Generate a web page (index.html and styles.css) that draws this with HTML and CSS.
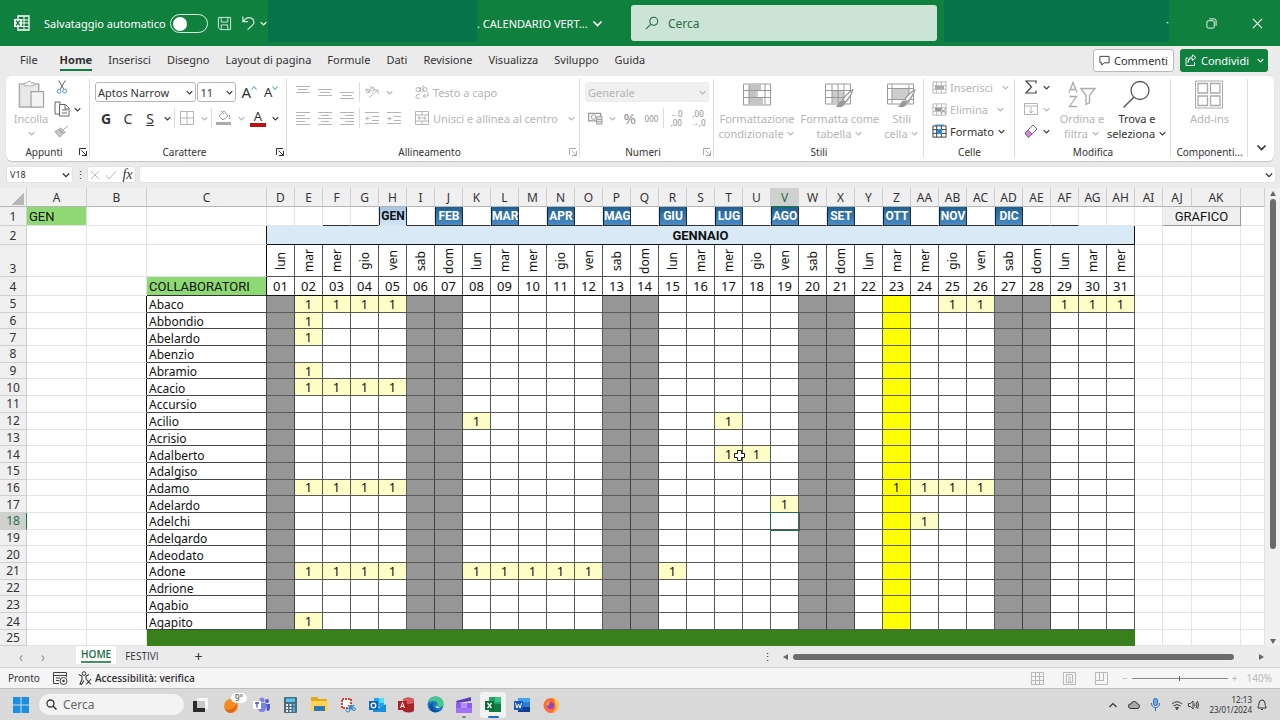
FILE: index.html
```html
<!DOCTYPE html>
<html lang="it">
<head>
  <meta charset="UTF-8" />
  <title>Calendario verticale</title>
  <meta name="viewport" content="width=device-width, initial-scale=1" />
  <link rel="stylesheet" href="styles.css">
</head>
<body>
  <svg class="sprite" aria-hidden="true">
    <symbol id="chev" viewBox="0 0 8 8"><path d="M1.5 2.8 4 5.3l2.500-2.500" fill="none" stroke="currentColor" stroke-width="1"/></symbol>
    <symbol id="launch" viewBox="0 0 8 8"><path d="M.5 7V.5H7M2.500 2.500l4.500 4.500M7.500 3v4.500H3" fill="none" stroke="currentColor"/></symbol>
    <symbol id="cells" viewBox="0 0 16 16"><path d="M1 2h14v12H1zM1 6h14M1 10h14M5 2v12M10 2v12" fill="none" stroke="currentColor"/></symbol>
    <symbol id="brush" viewBox="0 0 16 16"><path d="M15 1C12 3 8 7 7 9l2 2c2-2 5-6 6-10z" fill="#f4f4f4" stroke="currentColor"/><path d="M6.500 9.500c-3 0-2 4-5.500 4.500 3 2 7 1 8-2.500z" fill="currentColor"/></symbol>
  </svg>

  <header class="titlebar">
    <div class="title-left">
      <svg class="xl" viewBox="0 0 16 16" width="16" height="16"><path d="M4 1h11v14H4z" fill="none" stroke="#fff" stroke-width="1.300"/><path d="M4 5h11M4 8h11M4 11.500h11M10 1v14" stroke="#fff"/><path d="M0 4h8v8H0z" fill="#fff"/><path d="m2 5.500 4 5M6 5.500l-4 5" stroke="#107c41" stroke-width="1.300"/></svg>
      <label for="autosave">Salvataggio automatico</label>
      <input type="checkbox" class="toggle" id="autosave">
      <button class="tbtn" aria-label="Salva"><svg viewBox="0 0 16 16" width="15" height="15"><path d="M1.500 1.500h13v13h-11l-2-2zM4.500 1.500v5h7v-5M4.500 14.500v-5h7v5" fill="none" stroke="#d9efe1"/></svg></button>
      <button class="tbtn undo" aria-label="Annulla"><svg viewBox="0 0 16 16" width="15" height="16"><path d="M2 1v5.500h5.500M2.500 6C5 2.500 8.500 1.500 11.500 3c3 2 3 5.500.5 7.500L7 15" fill="none" stroke="#d9efe1" stroke-width="1.200"/></svg><svg width="9" height="9"><use href="#chev"/></svg></button>
    </div>
    <div class="mask"></div>
    <button class="doc">. CALENDARIO VERT... <svg width="13" height="13"><use href="#chev"/></svg></button>
    <label class="search">
      <svg viewBox="0 0 16 16" width="14" height="14"><circle cx="10" cy="6" r="4.500" fill="none" stroke="#1c6b3d" stroke-width="1.200"/><path d="m6.500 9.500-5.500 5.500" stroke="#1c6b3d" stroke-width="1.200"/></svg>
      <input type="text" placeholder="Cerca" aria-label="Cerca">
    </label>
    <div></div>
    <div class="mask">·</div>
    <div class="winbtns">
      <button aria-label="Ripristina"><svg viewBox="0 0 12 12" width="11" height="11"><rect x="1" y="3" width="8" height="8" rx="1.500" fill="none" stroke="#fff"/><path d="M3.500 1H9q2 0 2 2v5.500" fill="none" stroke="#fff"/></svg></button>
      <button aria-label="Chiudi"><svg viewBox="0 0 12 12" width="11" height="11"><path d="m1 1 10 10M11 1 1 11" stroke="#fff" stroke-width="1.200"/></svg></button>
    </div>
  </header>

  <nav class="tabs">
    <a href="#" class="file">File</a>
    <a href="#" class="current">Home</a>
    <a href="#">Inserisci</a>
    <a href="#">Disegno</a>
    <a href="#">Layout di pagina</a>
    <a href="#">Formule</a>
    <a href="#">Dati</a>
    <a href="#">Revisione</a>
    <a href="#">Visualizza</a>
    <a href="#">Sviluppo</a>
    <a href="#">Guida</a>
    <span class="spacer"></span>
    <button class="comments"><svg viewBox="0 0 12 12" width="11" height="11"><path d="M1 1.500h10v7H5.500L3 11V8.500H1z" fill="none" stroke="#333"/></svg>Commenti</button>
    <button class="share"><svg viewBox="0 0 12 12" width="12" height="12"><path d="M3 4H1v7.500h8.500V8M3 8.500C3.500 5.500 5 4.500 7.500 4.500V6.500L11 3.500 7.500.800v2C4.500 3 3 5 3 8.500z" fill="none" stroke="#fff" stroke-width=".9"/></svg><span>Condividi</span><svg width="9" height="9"><use href="#chev"/></svg></button>
  </nav>

  <section class="ribbon">
    <div class="group">
      <div class="group-body">
        <button class="big off paste">
          <svg viewBox="0 0 28 30" width="28" height="29"><path d="M2 4h20v24H2z" fill="#e9e9e9" stroke="#aaa" stroke-width="1.500"/><path d="M7 6V3h3q2-4 4 0h3v3z" fill="#fff" stroke="#aaa"/><path d="M14 12h13v16H14z" fill="#f3f3f3" stroke="#a4a4a4" stroke-width="1.300"/></svg>
          Incolla
          <svg width="9" height="9"><use href="#chev"/></svg>
        </button>
        <div class="stack">
          <button class="ib pair" aria-label="Taglia"><svg viewBox="0 0 16 15" width="16" height="14"><path d="M4.500.500 10 10M11.500.500 6 10" stroke="#555" fill="none"/><circle cx="5" cy="12" r="2" fill="none" stroke="#3a96c8"/><circle cx="11" cy="12" r="2" fill="none" stroke="#3a96c8"/></svg></button>
          <button class="ib pair" aria-label="Copia"><svg viewBox="0 0 16 16" width="16" height="16"><path d="M6 3V1H1v12h4" fill="none" stroke="#666"/><path d="M5.500 3.500h6l3.500 3.500v8H5.500zM11 4v4h4M8 9h5M8 12h5" fill="#fff" stroke="#666"/></svg><svg width="9" height="9"><use href="#chev"/></svg></button>
          <button class="ib pair" aria-label="Copia formato"><svg viewBox="0 0 16 14" width="15" height="13"><path d="m15 1-5 4M7 3l5 5-2 1-5-4zM5 5 1 7l5 6 4-4z" fill="#c9c9c9" stroke="#9a9a9a"/></svg></button>
        </div>
      </div>
      <div class="caption"><span>Appunti</span><svg width="8" height="8"><use href="#launch"/></svg></div>
    </div>

    <div class="group">
      <div class="group-body rows">
        <div class="line">
          <span class="pick name"><select aria-label="Tipo di carattere"><option>Aptos Narrow</option></select><svg width="9" height="9"><use href="#chev"/></svg></span>
          <span class="pick size"><select aria-label="Dimensione carattere"><option>11</option></select><svg width="9" height="9"><use href="#chev"/></svg></span>
          <button class="ib big-a" aria-label="Aumenta carattere">A<svg width="6" height="14"><path d="m.5 4.500 2.500-3 2.500 3" fill="none" stroke="#3a96c8"/></svg></button>
          <button class="ib small-a" aria-label="Riduci carattere">A<svg width="6" height="14"><path d="m.5 1.500 2.500 3 2.500-3" fill="none" stroke="#3a96c8"/></svg></button>
        </div>
        <div class="line">
          <button class="ib glyph"><b>G</b></button>
          <button class="ib glyph">C</button>
          <button class="ib glyph"><u>S</u></button>
          <button class="ch"><svg width="9" height="9"><use href="#chev"/></svg></button>
          <span class="sep"></span>
          <button class="ib off" aria-label="Bordi"><svg viewBox="0 0 14 14" width="14" height="14"><path d="M.5.500h13v13H.5zM7 0v14M0 7h14" fill="none" stroke="currentColor"/></svg></button>
          <button class="ch off"><svg width="9" height="9"><use href="#chev"/></svg></button>
          <span class="sep"></span>
          <button class="ib off" aria-label="Riempimento"><svg viewBox="0 0 16 16" width="16" height="16"><path d="m3 6 5-5 4 5-5 4zM5 1l3 3M13 5q2 3 0 4" fill="none" stroke="#999"/><path d="M0 12h15v3H0z" fill="#aaa"/></svg></button>
          <button class="ch off"><svg width="9" height="9"><use href="#chev"/></svg></button>
          <button class="ib fontcolor">A</button>
          <button class="ch"><svg width="9" height="9"><use href="#chev"/></svg></button>
        </div>
      </div>
      <div class="caption"><span>Carattere</span><svg width="8" height="8"><use href="#launch"/></svg></div>
    </div>

    <div class="group">
      <div class="group-body">
        <div class="rows inner">
          <div class="line off">
            <button class="ib" aria-label="In alto"><svg width="14" height="14"><path d="M0 1.500h14M2 4.500h10M0 7.500h14" stroke="currentColor"/></svg></button>
            <button class="ib" aria-label="Al centro"><svg width="14" height="14"><path d="M0 4.500h14M2 7.500h10M0 10.500h14" stroke="currentColor"/></svg></button>
            <button class="ib" aria-label="In basso"><svg width="14" height="14"><path d="M0 7.500h14M2 10.500h10M0 13.500h14" stroke="currentColor"/></svg></button>
            <span class="sep"></span>
            <button class="ib" aria-label="Orientamento"><svg viewBox="0 0 16 14" width="15" height="14"><circle cx="3" cy="6" r="2" fill="none" stroke="currentColor"/><circle cx="8" cy="4" r="2" fill="none" stroke="currentColor"/><path d="m4 13 10-8M14 9V5h-4M1 3l4 5M5 0l5 5" stroke="currentColor" fill="none"/></svg></button>
            <button class="ch"><svg width="9" height="9"><use href="#chev"/></svg></button>
          </div>
          <div class="line off">
            <button class="ib" aria-label="A sinistra"><svg width="14" height="14"><path d="M0 1.500h14M0 4.500h9M0 7.500h14M0 10.500h9M0 13.500h14" stroke="currentColor"/></svg></button>
            <button class="ib" aria-label="Centrato"><svg width="14" height="14"><path d="M0 1.500h14M3 4.500h8M0 7.500h14M3 10.500h8M0 13.500h14" stroke="currentColor"/></svg></button>
            <button class="ib" aria-label="A destra"><svg width="14" height="14"><path d="M0 1.500h14M5 4.500h9M0 7.500h14M5 10.500h9M0 13.500h14" stroke="currentColor"/></svg></button>
            <span class="sep"></span>
            <button class="ib" aria-label="Riduci rientro"><svg width="14" height="14"><path d="M0 1.500h14M7 5.500h7M7 9.500h7M0 12.500h14M5 7.500H1M3 5.500l-2 2 2 2" stroke="currentColor" fill="none"/></svg></button>
            <button class="ib" aria-label="Aumenta rientro"><svg width="14" height="14"><path d="M0 1.500h14M7 5.500h7M7 9.500h7M0 12.500h14M0 7.500h4M2 5.500l2 2-2 2" stroke="currentColor" fill="none"/></svg></button>
          </div>
        </div>
        <span class="sep tall"></span>
        <div class="rows inner wide">
          <button class="line off txt"><svg viewBox="0 0 14 14" width="14" height="14"><circle cx="3" cy="4.500" r="2" fill="none" stroke="currentColor"/><path d="M5.500 2v5M8 0v7M5 9.500q-4-1-4 2t4 1.500M13 7v4H8M10 9l-2 2 2 2" fill="none" stroke="currentColor"/><circle cx="10" cy="4.500" r="2" fill="none" stroke="currentColor"/></svg>Testo a capo</button>
          <button class="line off txt"><svg viewBox="0 0 14 14" width="14" height="14"><path d="M.5.500h13v13H.5zM0 4h14M0 10h14M7 0v4M7 10v4M3 7h8M5 5.500 3 7l2 1.500M9 5.500 11 7 9 8.500" fill="none" stroke="currentColor"/></svg>Unisci e allinea al centro<svg class="far" width="9" height="9"><use href="#chev"/></svg></button>
        </div>
      </div>
      <div class="caption dim"><span>Allineamento</span><svg width="8" height="8"><use href="#launch"/></svg></div>
    </div>

    <div class="group">
      <div class="group-body rows">
        <div class="line off">
          <span class="pick format"><select aria-label="Formato numero" disabled><option>Generale</option></select><svg width="9" height="9"><use href="#chev"/></svg></span>
        </div>
        <div class="line off">
          <button class="ib" aria-label="Valuta"><svg viewBox="0 0 16 14" width="15" height="13"><path d="M.5 1.500h13v8H.5z" fill="none" stroke="#999" stroke-width="1.500"/><circle cx="6" cy="5.500" r="2.500" fill="none" stroke="#999"/><path d="M9 5h6v8H9zM9 8h6M9 10.500h6" fill="#e8e8e8" stroke="#999"/></svg></button>
          <button class="ch"><svg width="9" height="9"><use href="#chev"/></svg></button>
          <button class="ib pct">%</button>
          <button class="ib tiny">000</button>
          <span class="sep"></span>
          <button class="ib dec"><span>←0</span><span>,00</span></button>
          <button class="ib dec"><span>,00</span><span>→,0</span></button>
        </div>
      </div>
      <div class="caption dim"><span>Numeri</span><svg width="8" height="8"><use href="#launch"/></svg></div>
    </div>

    <div class="group">
      <div class="group-body styles">
        <button class="big off"><svg viewBox="0 0 28 28" width="28" height="29"><path d="M.5 3.500h27v21H.5z" fill="#fff" stroke="#999"/><path d="M6 4h12v6H6zM6 10h7v7H6zM6 17h14v7H6z" fill="#c4c4c4"/><path d="M1 10h26M1 17h26M6 4v20M22 4v20M14 10v7" stroke="#999" fill="none"/></svg>Formattazione<span>condizionale <svg width="9" height="9"><use href="#chev"/></svg></span></button>
        <button class="big off"><svg viewBox="0 0 30 28" width="30" height="29"><path d="M.5 3.500h25v20H.5z" fill="#fff" stroke="#999"/><path d="M7 10h12v13H7z" fill="#cdcdcd"/><path d="M1 10h24M1 17h24M7 4v19M13 4v19M19 4v19" stroke="#999"/><svg x="9" y="8" width="20" height="20" color="#999"><use href="#brush"/></svg></svg>Formatta come<span>tabella <svg width="9" height="9"><use href="#chev"/></svg></span></button>
        <button class="big off"><svg viewBox="0 0 30 28" width="30" height="29"><path d="M.5 3.500h26v20H.5z" fill="#fff" stroke="#999"/><path d="M5 8h17v11H5z" fill="#cdcdcd"/><path d="M1 8h25M1 19h25M5 4v19M22 4v19" stroke="#999"/><svg x="9" y="8" width="20" height="20" color="#999"><use href="#brush"/></svg></svg>Stili<span>cella <svg width="9" height="9"><use href="#chev"/></svg></span></button>
      </div>
      <div class="caption"><span>Stili</span></div>
    </div>

    <div class="group">
      <div class="group-body stack cells">
        <button class="txt off"><svg width="15" height="15"><use href="#cells"/><path d="M3 6h9v3H3z" fill="#aaa"/></svg>Inserisci<svg class="far" width="9" height="9"><use href="#chev"/></svg></button>
        <button class="txt off"><svg width="15" height="15"><use href="#cells"/><path d="M3 6h6v3H3z" fill="#999"/><path d="m9 6 5 6M14 6l-5 6" stroke="#999"/></svg>Elimina<svg class="far" width="9" height="9"><use href="#chev"/></svg></button>
        <button class="txt"><svg width="15" height="15"><use href="#cells"/><path d="M5 5h5v5H5z" fill="#2b88d8"/><path d="M3 1h9" stroke="#2b88d8" stroke-width="1"/></svg>Formato<svg width="9" height="9"><use href="#chev"/></svg></button>
      </div>
      <div class="caption"><span>Celle</span></div>
    </div>

    <div class="group">
      <div class="group-body edit">
        <div class="stack">
          <button class="ib pair" aria-label="Somma"><svg viewBox="0 0 14 14" width="14" height="14"><path d="M12 3.500V1H2l5.500 6L2 13h10v-2.500" fill="none" stroke="#444" stroke-width="1.200"/></svg><svg width="9" height="9"><use href="#chev"/></svg></button>
          <button class="ib pair off" aria-label="Riempi"><svg width="14" height="12"><path d="M.5.500h13v11H.5zM0 3h14M7 4v6M5 8l2 2 2-2" fill="none" stroke="currentColor"/></svg><svg width="9" height="9"><use href="#chev"/></svg></button>
          <button class="ib pair" aria-label="Cancella"><svg viewBox="0 0 14 14" width="14" height="14"><path d="m1 9 8-8 4 4-8 8H4z" fill="#fff" stroke="#8f5a99"/><path d="m1 9 3-3 4 4-3 3H4z" fill="#cf8ad8" stroke="#8f5a99"/></svg><svg width="9" height="9"><use href="#chev"/></svg></button>
        </div>
        <button class="big off"><svg viewBox="0 0 28 28" width="28" height="29"><path d="m1 12 4-10 4 10M2.500 9h5M1.500 16h7l-7 10h7.500M13 8h14l-5.500 7v7l-3.500 2v-9z" fill="none" stroke="#aaa" stroke-width="1.300"/></svg>Ordina e<span>filtra <svg width="9" height="9"><use href="#chev"/></svg></span></button>
        <button class="big"><svg viewBox="0 0 28 28" width="28" height="29"><circle cx="17" cy="10" r="9" fill="none" stroke="#555" stroke-width="1.300"/><path d="M11 16.500.5 27" stroke="#555" stroke-width="1.500"/></svg>Trova e<span>seleziona <svg width="9" height="9"><use href="#chev"/></svg></span></button>
      </div>
      <div class="caption"><span>Modifica</span></div>
    </div>

    <div class="group">
      <div class="group-body styles">
        <button class="big off"><svg viewBox="0 0 28 28" width="28" height="29"><path d="M.5.500h27v27H.5z" fill="none" stroke="#aaa"/><path d="M3 3h9.500v9.500H3zM15.500 3H25v9.500h-9.500zM3 15.500h9.500V25H3zM15.500 15.500H25V25h-9.500z" fill="none" stroke="#aaa" stroke-width="1.300"/></svg>Add-ins</button>
      </div>
      <div class="caption"><span>Componenti...</span></div>
    </div>
    <button class="collapse" aria-label="Comprimi"><svg width="13" height="13"><use href="#chev"/></svg></button>
  </section>

  <section class="formula">
    <span class="pick cellname"><input type="text" value="V18" aria-label="Casella nome"><svg width="10" height="10"><use href="#chev"/></svg></span>
    <span class="dots">⋮</span>
    <span class="fxbox">
      <svg width="10" height="10"><path d="m1 1 8 8M9 1 1 9" stroke="#bbb"/></svg>
      <svg width="12" height="10"><path d="m1 5 3 4 7-8" fill="none" stroke="#bbb"/></svg>
      <i>fx</i>
    </span>
    <span class="pick fx"><input type="text" aria-label="Barra della formula"><svg width="10" height="10"><use href="#chev"/></svg></span>
  </section>

  <main class="sheet">
    <table id="grid"></table>
    <div class="vscroll"><i class="up"></i><div class="thumb"></div><i class="down"></i></div>
  </main>

  <footer class="sheettabs">
    <button class="nav">‹</button>
    <button class="nav">›</button>
    <button class="stab active"><span>HOME</span></button>
    <button class="stab">FESTIVI</button>
    <button class="add" aria-label="Nuovo foglio">+</button>
    <span class="spacer"></span>
    <span class="dots">⋮</span>
    <div class="hscroll"><i class="left"></i><div class="thumb"></div><i class="right"></i></div>
  </footer>

  <div class="status">
    <span>Pronto</span>
    <svg width="15" height="13"><path d="M6 11.500H.5V.500h13V5M0 3.500h14M3 6h4M3 8.500h3" fill="none" stroke="#444"/><circle cx="10.500" cy="9" r="3.500" fill="none" stroke="#444"/><circle cx="10.500" cy="9" r="1.300" fill="#444"/></svg>
    <button class="access"><svg viewBox="0 0 14 14" width="14" height="14"><circle cx="6" cy="2.500" r="1.800" fill="none" stroke="#333"/><path d="M.800 3.500 4 5v3.500L2 13l1.500.5L6 9.500M11 3.500 8 5v3M8 8l5 5.500M13 8l-5 5.500" fill="none" stroke="#333" stroke-width="1.100"/></svg>Accessibilità: verifica</button>
    <span class="spacer"></span>
    <button class="view" aria-label="Normale"><svg width="13" height="13"><path d="M.5.500h12v12H.5zM4.500 0v13M8.500 0v13M0 4.500h13M0 8.500h13" fill="none" stroke="currentColor"/></svg></button>
    <button class="view" aria-label="Layout di pagina"><svg width="13" height="13"><path d="M.5.500h12v12H.5zM3.500 2.500h6v8h-6zM5 5h3M5 7h3M5 9h3" fill="none" stroke="currentColor"/></svg></button>
    <button class="view" aria-label="Interruzioni"><svg width="13" height="13"><path d="M.5.500h12v12H.5zM4.500 0v8M8.500 0v8M0 8.500h9" fill="none" stroke="currentColor"/></svg></button>
    <span class="zoom">−</span>
    <input type="range" class="range" aria-label="Zoom">
    <span class="zoom">+</span>
    <span class="zoom pc">140%</span>
  </div>

  <div class="taskbar">
    <button class="win" aria-label="Start"><svg width="16" height="16"><path d="M0 0h7.500v7.500H0zM8.500 0H16v7.500H8.500zM0 8.500h7.500V16H0zM8.500 8.500H16V16H8.500z" fill="#1a8fe0"/></svg></button>
    <label class="tsearch"><svg width="11" height="11"><circle cx="4.500" cy="4.500" r="3.500" fill="none" stroke="#333" stroke-width="1.300"/><path d="m7 7 3.500 3.500" stroke="#333" stroke-width="1.500"/></svg><input type="text" placeholder="Cerca" aria-label="Cerca nel PC"></label>
    <div class="apps">
      <button aria-label="Viste"><svg width="16" height="16"><path d="M5 1h11v11H5z" fill="#f7f7f7"/><path d="M1 4h4v7h8v4H1z" fill="#2b2b2b"/><path d="M5 4h8v7H5z" fill="#c8c8c8"/></svg></button>
      <button aria-label="Meteo" class="meteo"><svg width="16" height="16"><circle cx="7" cy="9" r="7" fill="#f28c1e"/><path d="M1 12q6 3 12-5-1 8-6 9-4 0-6-4z" fill="#e0641a"/></svg><span>9°</span></button>
      <button aria-label="Teams"><svg width="17" height="16"><circle cx="9" cy="3" r="2.500" fill="#7b83eb"/><circle cx="14" cy="4" r="2" fill="#5059c9"/><path d="M5 6h8v5q0 4-4 4t-4-4z" fill="#7b83eb"/><path d="M13 7h4v4q0 3-3 3z" fill="#5059c9"/><path d="M0 4h8v8H0z" fill="#fff"/><path d="M2 6h4M4 6v4.500" stroke="#4b53bc" stroke-width="1.300"/></svg></button>
      <button aria-label="Calcolatrice"><svg width="13" height="16"><rect width="13" height="16" rx="1" fill="#4c6b7d"/><path d="M2 1.500h9v3.500H2z" fill="#58c8f0"/><path d="M2 7h2v2H2zM5.500 7h2v2h-2zM2 10h2v2H2zM5.500 10h2v2h-2zM2 13h2v2H2zM5.500 13h2v2h-2z" fill="#e6eef2"/><path d="M9 7h2v2H9zM9 10h2v5H9z" fill="#49b3e0"/></svg></button>
      <button aria-label="Esplora file"><svg width="17" height="15"><path d="M0 1q0-1 1-1h5l2 2h8v12H0z" fill="#e3a81c"/><path d="M0 4h17v10H0z" fill="#fcd354"/><path d="M3 9h11v5H3z" fill="#2f78b5"/></svg></button>
      <button aria-label="Cattura"><svg width="16" height="16"><path d="M2 2h9v9H2z" fill="#fff" stroke="#d8422e" stroke-width="2" stroke-dasharray="2 1"/><path d="m8 8 5 5M14 8l-5 5" stroke="#3290c9" stroke-width="1.500"/><circle cx="8" cy="13" r="2" fill="none" stroke="#3290c9"/><circle cx="14" cy="12" r="1.500" fill="none" stroke="#3290c9"/></svg></button>
      <button aria-label="Outlook"><svg width="17" height="16"><path d="M5 1h10v9H5z" fill="#28a8ea"/><path d="M10 1h5v5h-5z" fill="#50d9ff"/><path d="m4 7 6 4 7-4v8H4z" fill="#1490df"/><path d="M0 4h9v9H0z" fill="#0f64b8"/><circle cx="4.500" cy="8.500" r="2.300" fill="none" stroke="#fff" stroke-width="1.300"/></svg></button>
      <button aria-label="Access"><svg width="17" height="16"><path d="M5 2q5-3 11 0v12q-5 3-11 0z" fill="#a4262c"/><path d="M5 2q5-3 11 0v4q-5 2-11 0z" fill="#d95b61"/><path d="M0 4h9v9H0z" fill="#b01e28"/><path d="m2.500 11 2-5.500 2 5.500M3.200 9.300h2.600" fill="none" stroke="#fff"/></svg></button>
      <button aria-label="Edge"><svg width="17" height="17"><circle cx="8.500" cy="8.500" r="8" fill="#1a78c8"/><path d="M1 7Q3 0 10 .6q7 1.500 6.500 8-1 3-5 2.500-2-.5-1-2.500 0-4-4.500-3.500Q3 5 1 7z" fill="#45c98a"/><path d="M6 7q-2 7 7 7.500-6 4-9.500-1T6 7z" fill="#0c509c"/><path d="M9 9.500q1 2.500 5 1.500l-3 1q-3-.5-2-2.500z" fill="#fff"/></svg></button>
      <button aria-label="Clipchamp" class="open"><svg width="16" height="16"><path d="m0 4 15-4v4L1 6z" fill="#5d3fb5"/><path d="M0 6h16v10H0z" fill="#8a5cf0"/><path d="M5 6h6v5H5z" fill="#b78cf8"/><path d="M0 11h16v5H0z" fill="#a071f2"/></svg></button>
      <button aria-label="Excel" class="front"><svg width="17" height="16"><path d="M4 0h12v15H4z" fill="#21a366"/><path d="M10 0h6v5h-6z" fill="#33c481"/><path d="M4 7h12v8H4z" fill="#107c41"/><path d="M0 4h9v9H0z" fill="#0e6b38"/><path d="m2.500 6 4 5M6.500 6l-4 5" stroke="#fff" stroke-width="1.300"/></svg></button>
      <button aria-label="Word"><svg width="17" height="16"><path d="M4 1h12v14H4z" fill="#2b7cd3"/><path d="M4 1h12v4H4z" fill="#41a5ee"/><path d="M4 10h12v5H4z" fill="#103f91"/><path d="M0 4h9v9H0z" fill="#185abd"/><path d="m1.500 6 1.500 5 1.500-4L6 11l1.500-5" fill="none" stroke="#fff"/></svg></button>
      <button aria-label="Firefox"><svg width="16" height="16"><circle cx="8" cy="8.500" r="7.500" fill="#ff6a3a"/><path d="M10 0q6 3 5.500 9-1 5-6 6.500 4-4 3-8T10 0z" fill="#ffc83d"/><circle cx="7.500" cy="8.500" r="3.500" fill="#8f43c8"/><path d="M3 6q3-2 5 0-3 0-2 3-3 0-3-3z" fill="#ff9a2a"/></svg></button>
    </div>
    <div class="tray">
      <svg class="more" width="10" height="8"><path d="m1.500 6 3.500-3.500L8.500 6" fill="none" stroke="#333" stroke-width="1.200"/></svg>
      <svg width="12" height="10"><path d="M3 8.500Q.500 8.500.500 6T3 4Q4 1 6.500 1.500T9.500 4q2 0 2 2.300T9 8.500z" fill="#aaa" stroke="#333"/></svg>
      <svg class="mic" width="9" height="13"><rect x="2.500" y=".5" width="4" height="7" rx="2" fill="#7ba8dc" stroke="#2d6cb8"/><path d="M.5 5q0 4.500 4 4.500T8.500 5M4.500 9.500V13" fill="none" stroke="#2d6cb8"/></svg>
      <svg width="12" height="10"><path d="M1 4q5-4.500 10 0M2.500 6Q6 3 9.500 6M4 8q2-1.500 4 0" fill="none" stroke="#333"/><circle cx="6" cy="9" r="1" fill="#333"/></svg>
      <svg width="11" height="10"><path d="M.5 3.500h2L5 1v8L2.500 6.500h-2zM6.500 3.500q1 1.500 0 3M8 2q2 3 0 6M9.500 1q2 4 0 8" fill="none" stroke="#333" stroke-width=".9"/></svg>
      <time class="clock" datetime="2024-01-23T12:13">12:13<br>23/01/2024</time>
      <svg width="10" height="12"><path d="M1 9V8q1-1 1-4 .5-3 3-3t3 3q0 3 1 4v1zM4 10.500h2" fill="none" stroke="#333"/></svg>
    </div>
  </div>

  <script src="script.js"></script>
</body>
</html>
```
FILE: styles.css
```css
* {
  box-sizing: border-box;
}
body {
  margin: 0;
  height: 100vh;
  min-height: 600px;
  display: flex;
  flex-direction: column;
  background: #ebebeb;
  color: #333;
  font-family: "Noto Sans", "Open Sans", sans-serif;
  font-size: 11px;
  overflow: hidden;
}
button, input, select {
  font: inherit;
  color: inherit;
  border: none;
  background: none;
  padding: 0;
  margin: 0;
  outline: none;
}
svg {
  flex: none;
}
a {
  color: inherit;
  text-decoration: none;
}
.sprite {
  display: none;
}
.spacer {
  flex: 1;
}

/* title bar */
.titlebar {
  display: grid;
  grid-template-columns: 268fr 209fr 154fr 306fr 7fr 225fr 111fr;
  height: 46px;
  flex: none;
  background: #10803f;
  color: #fff;
}
.titlebar > * {
  min-width: 0;
}
.title-left {
  display: flex;
  align-items: center;
  padding-left: 14px;
  white-space: nowrap;
}
.title-left label {
  margin: 0 4px 0 14px;
}
.toggle {
  appearance: none;
  width: 40px;
  height: 19px;
  border: 1px solid #d9efe1;
  border-radius: 10px;
  padding: 1px;
}
.toggle::before {
  content: "";
  display: block;
  width: 14px;
  height: 14px;
  margin: 1px;
  border-radius: 50%;
  background: #fff;
}
.tbtn {
  display: flex;
  align-items: center;
  margin-left: 9px;
}
.tbtn svg + svg {
  margin-left: 3px;
}
.mask {
  background: #07734a;
  height: 42px;
  line-height: 44px;
  text-align: right;
}
.doc {
  display: flex;
  align-items: center;
  text-align: left;
  white-space: nowrap;
  gap: 3px;
}
.search {
  display: flex;
  align-items: center;
  gap: 9px;
  height: 36px;
  margin-top: 5px;
  padding-left: 14px;
  border-radius: 3px;
  background: #cbe4d5;
}
.search input {
  flex: 1;
  min-width: 0;
  font-size: 12px;
}
.search input::placeholder {
  color: #2f6c48;
  opacity: 1;
}
.winbtns {
  display: flex;
  justify-content: flex-end;
}
.winbtns button {
  width: 46px;
  display: flex;
  align-items: center;
  justify-content: center;
}

/* ribbon tabs */
.tabs {
  display: flex;
  align-items: center;
  height: 30px;
  flex: none;
  gap: 16px;
  padding: 0 12px 2px 20px;
  white-space: nowrap;
}
.tabs a {
  line-height: 18px;
  padding-top: 2px;
  border-bottom: 2px solid transparent;
}
.tabs .file {
  margin-right: 6px;
}
.tabs .current {
  font-weight: bold;
  border-color: #107c41;
}
.comments, .share {
  display: flex;
  align-items: center;
  height: 23px;
  border-radius: 3px;
}
.comments {
  gap: 4px;
  padding: 0 5px;
  background: #fff;
  border: 1px solid #b9b9b9;
}
.share {
  gap: 4px;
  margin-left: -10px;
  padding: 0 3px 0 5px;
  background: #10803f;
  color: #fff;
}
.share span {
  margin-right: 3px;
}

/* ribbon */
.ribbon {
  display: grid;
  grid-template-columns: 84fr 197fr 293fr 134fr 210fr 91fr 156fr 77fr 26fr;
  height: 85px;
  flex: none;
  margin: 0 6px;
  background: #fff;
  border-radius: 6px;
  box-shadow: 0 1px 1px #c4c4c4;
}
.group {
  display: flex;
  flex-direction: column;
  min-width: 0;
  position: relative;
  white-space: nowrap;
}
.group::after {
  content: "";
  position: absolute;
  top: 3px;
  right: 0;
  bottom: 4px;
  width: 1px;
  background: #dcdcdc;
}
.group-body {
  flex: 1;
  display: flex;
  min-height: 0;
}
.caption {
  display: flex;
  align-items: center;
  height: 18px;
  padding: 0 3px;
  font-size: 10px;
}
.caption span {
  flex: 1;
  text-align: center;
}
.caption.dim svg {
  color: #aaa;
}
.off {
  color: #b4b4b4;
}
.rows {
  flex-direction: column;
  gap: 4px;
  padding: 5px 5px 0;
}
.rows.inner {
  display: flex;
}
.rows.inner.wide {
  padding-left: 3px;
}
.line {
  display: flex;
  align-items: center;
  height: 22px;
}
.txt {
  display: flex;
  align-items: center;
  gap: 4px;
  height: 22px;
}
.txt .far {
  margin-left: 5px;
}
.ib {
  display: flex;
  align-items: center;
  justify-content: center;
  width: 22px;
  height: 22px;
}
.ib.pair {
  width: 32px;
  gap: 3px;
  justify-content: flex-start;
}
.ch {
  width: 12px;
  height: 22px;
  display: flex;
  align-items: center;
  justify-content: center;
}
.sep {
  width: 1px;
  height: 20px;
  margin: 0 1px;
  background: #dcdcdc;
}
.sep.tall {
  height: 56px;
  margin-top: 6px;
}
.glyph {
  font-size: 14px;
}
.big-a {
  font-size: 15px;
  margin-left: 2px;
}
.small-a {
  font-size: 13px;
}
.fontcolor {
  height: 17px;
  width: 16px;
  margin: 0 3px;
  font-size: 13px;
  line-height: 13px;
  border-bottom: 4px solid #c00f13;
}
.pct {
  font-size: 15px;
  color: #8f8f8f;
}
.tiny {
  font-size: 8px;
  color: #8f8f8f;
}
.ib.dec {
  flex-direction: column;
  font-size: 8px;
  line-height: 10px;
  color: #8f8f8f;
}
.dec span {
  height: 9px;
}
.pick {
  display: flex;
  align-items: center;
  position: relative;
  height: 20px;
  border: 1px solid #b5b5b5;
  border-radius: 3px;
}
.pick select, .pick input {
  appearance: none;
  width: 100%;
  height: 100%;
  padding-left: 2px;
  opacity: 1;
}
.pick svg {
  position: absolute;
  right: 1px;
  pointer-events: none;
}
.pick.name {
  width: 102px;
}
.pick.size {
  width: 39px;
  margin-left: 1px;
}
.pick.format {
  width: 124px;
  background: #f0f0f0;
  border-color: #ececec;
}
.big {
  display: flex;
  flex-direction: column;
  align-items: center;
  line-height: 15px;
  padding-top: 4px;
}
.big > svg:first-child {
  margin-bottom: 2px;
}
.big > svg + svg {
  margin-top: 3px;
}
.paste {
  width: 46px;
  margin: 0 0 0 2px;
}
.stack {
  display: flex;
  flex-direction: column;
}
.styles {
  justify-content: center;
  gap: 5px;
}
.cells {
  padding-left: 8px;
}
.cells .txt {
  gap: 3px;
}
.edit {
  padding-left: 9px;
}
.edit .stack {
  width: 32px;
}
.edit .ib.pair {
  gap: 4px;
}
.edit .big {
  width: 52px;
}
.edit .big + .big {
  width: 58px;
}
.collapse {
  align-self: end;
  height: 24px;
}

/* formula bar */
.formula {
  display: flex;
  align-items: center;
  height: 27px;
  flex: none;
  padding: 0 4px 0 6px;
}
.formula .pick, .fxbox {
  height: 17px;
  background: #fff;
  border: 1px solid #e2e2e2;
}
.formula .cellname {
  width: 67px;
  font-size: 9px;
}
.formula .pick input {
  padding-left: 3px;
}
.dots {
  width: 14px;
  text-align: center;
}
.fxbox {
  display: flex;
  align-items: center;
  justify-content: space-around;
  width: 49px;
  margin-right: 3px;
  border-radius: 3px;
}
.fxbox i {
  font: italic 14px "Liberation Serif", serif;
}
.formula .fx {
  flex: 1;
}

/* sheet */
.sheet {
  display: flex;
  flex: 1;
  min-height: 0;
  background: #f0f0f0;
}
#grid {
  flex: 1;
  width: 100%;
  height: 100%;
  table-layout: fixed;
  border-collapse: separate;
  border-spacing: 0;
  background: #fff;
  color: #111;
  font-size: 12px;
  line-height: 15px;
}
#grid th, #grid td {
  padding: 0;
  border-right: 1px solid #e4e4e4;
  border-bottom: 1px solid #e4e4e4;
  text-align: center;
  white-space: nowrap;
  overflow: hidden;
}
#grid th {
  font-weight: normal;
  font-size: 12px;
  color: #333;
  background: #f0f0f0;
  border-color: #cfcfcf;
}
#grid thead th {
  border-bottom-color: #b5b5b5;
}
#grid th.sel {
  background: #cfd1cf;
  color: #2b6a47;
  border-bottom-color: #107c41;
}
#grid tbody th.sel {
  border-right: 1px solid #107c41;
  border-bottom-color: #cfcfcf;
}
.corner::after {
  content: "";
  display: block;
  margin: 2px 2px 0 11px;
  height: 13px;
  background: linear-gradient(135deg, transparent 50%, #b7b7b7 50%);
}
.w-head { width: 27px; }
.w-a { width: 60px; }
.w-c { width: 120px; }
.w-day { width: 28px; }
.w-aj { width: 29px; }
.w-ak { width: 49px; }
.top {
  height: 19px;
}
.r-days {
  height: 32px;
}
.r-days th {
  vertical-align: bottom;
}
.r-end {
  height: 16px;
}
#grid .green {
  background: #8ed973;
  text-align: left;
  padding-left: 2px;
  font-family: Roboto, sans-serif;
  font-size: 13px;
}
#grid .under {
  border-bottom-color: #333;
}
#grid .edge {
  border-right-color: #111;
}
#grid .month {
  border-right-color: #1b2b3a;
}
.month button {
  display: block;
  width: 100%;
  height: 18px;
  border-left: 1px solid #123;
  text-align: center;
  background: linear-gradient(#205f8f, #4a8bc6);
  color: #fff;
  font: bold 12px Roboto, sans-serif;
}
#grid .month.on {
  border-bottom-color: #d9e9f5;
}
.month.on button {
  background: linear-gradient(#a3c5e4, #d3e5f4);
  color: #111;
}
#grid .title {
  background: #d9e9f5;
  border-bottom-color: #111;
  border-right-color: #111;
  font: bold 13px Roboto, sans-serif;
}
#grid .day {
  border-color: #555;
}
.day span {
  display: inline-block;
  writing-mode: vertical-rl;
  transform: rotate(180deg);
  line-height: 16px;
  vertical-align: middle;
}
#grid .num {
  border-color: #555;
  border-bottom-color: #111;
  font-size: 13px;
}
#grid .person {
  text-align: left;
  padding: 2px 0 0 2px;
  line-height: 13px;
  border-color: #444;
}
#grid .cell {
  border-color: #5a5a5a;
  padding-top: 1px;
  font-size: 13px;
  line-height: 13px;
}
#grid .one {
  background: #fdfdc6;
}
#grid .rest {
  background: #969696;
  border-right-color: #444;
}
#grid .fest {
  background: #ff0;
}
#grid .active {
  position: relative;
  z-index: 1;
  outline: 1px solid #1f6b50;
}
#grid .base {
  background: #37801c;
  border-color: #37801c;
}
#grid .graph {
  border-color: #999;
  background: #efefef;
}
.graph button {
  font-family: Roboto, sans-serif;
  font-size: 13px;
}
#grid td.hover {
  position: relative;
  overflow: visible;
}
.cursor {
  position: absolute;
  left: 19px;
  top: 4px;
  z-index: 1;
}
.vscroll {
  width: 15px;
  flex: none;
  display: flex;
  flex-direction: column;
  align-items: center;
  gap: 3px;
  padding: 3px 0 2px;
}
.vscroll .thumb {
  width: 6px;
  height: 350px;
  border-radius: 3px;
  background: #6b6b6b;
  margin-bottom: auto;
}
.up, .down {
  border: 3px solid transparent;
  border-bottom: 5px solid #666;
  border-top: 0;
}
.down {
  border-top: 5px solid #666;
  border-bottom: 0;
}

/* sheet tabs */
.sheettabs {
  display: flex;
  align-items: center;
  height: 22px;
  flex: none;
  padding-left: 10px;
  border-bottom: 1px solid #cfcfcf;
}
.nav {
  width: 22px;
  font-size: 14px;
  line-height: 18px;
  color: #999;
}
.stab {
  height: 18px;
  align-self: flex-start;
  padding: 2px 9px 0;
  font: 10px "Open Sans", sans-serif;
}
.stab.active {
  margin-left: 22px;
  padding: 0 5px;
  background: #fff;
  color: #226b45;
  font-weight: 600;
}
.stab.active span {
  display: block;
  line-height: 14px;
  border-bottom: 2px solid #3f9567;
}
.add {
  width: 62px;
  font-size: 14px;
}
.hscroll {
  width: 506px;
  display: flex;
  align-items: center;
  gap: 5px;
  padding: 0 16px 0 9px;
}
.hscroll .thumb {
  flex: 1;
  height: 6px;
  border-radius: 3px;
  background: #6b6b6b;
  margin-right: 20px;
}
.left, .right {
  border: 3px solid transparent;
  border-right: 5px solid #666;
  border-left: 0;
}
.right {
  border-left: 5px solid #666;
  border-right: 0;
}

/* status bar */
.status {
  display: flex;
  align-items: center;
  height: 20px;
  flex: none;
  padding: 0 8px;
  background: #f5f5f5;
  font-size: 10px;
}
.status > svg {
  margin: 0 10px 0 13px;
}
.access {
  display: flex;
  align-items: center;
  gap: 3px;
  font: 600 10px "Open Sans", sans-serif;
}
.view, .zoom {
  color: #b9b9b9;
}
.view {
  display: flex;
  margin-right: 19px;
}
.view + .zoom {
  margin-left: -5px;
}
.range {
  appearance: none;
  width: 96px;
  height: 5px;
  margin: 0 4px;
  background: linear-gradient(transparent 2px, #888 2px, #888 3px, transparent 3px);
}
.range::-webkit-slider-thumb {
  appearance: none;
  width: 1px;
  height: 5px;
  background: #666;
}
.zoom.pc {
  margin-left: 9px;
}

/* taskbar */
.taskbar {
  display: flex;
  align-items: center;
  height: 32px;
  flex: none;
  padding: 0 13px;
  background: #d9d9d9;
  border-top: 1px solid #bdbdbd;
}
.win {
  display: flex;
  margin-right: 10px;
}
.tsearch {
  display: flex;
  align-items: center;
  gap: 6px;
  width: 145px;
  height: 21px;
  padding-left: 7px;
  border-radius: 11px;
  background: #f3f3f3;
  font-size: 12px;
}
.tsearch input {
  flex: 1;
  min-width: 0;
}
.tsearch input::placeholder {
  color: #666;
  opacity: 1;
}
.apps {
  display: flex;
  flex: 1;
  padding-left: 3px;
  gap: 3px;
}
.apps button {
  width: 26px;
  height: 26px;
  display: flex;
  align-items: center;
  justify-content: center;
  position: relative;
  border-radius: 3px;
}
.apps .meteo {
  margin-left: 3px;
}
.meteo span {
  position: absolute;
  left: 12px;
  top: 1px;
  padding: 0 4px;
  border-radius: 6px;
  background: #fff;
  font-size: 8px;
  line-height: 10px;
}
.apps .front {
  background: #f2f2f2;
}
.open::after, .front::after {
  content: "";
  position: absolute;
  bottom: 0;
  width: 4px;
  height: 2px;
  border-radius: 1px;
  background: #888;
}
.front::after {
  width: 11px;
  background: #1a6fc0;
}
.tray {
  display: flex;
  align-items: center;
  gap: 5px;
}
.tray .more {
  margin-right: 5px;
}
.tray .mic {
  margin: 0 6px;
}
.clock {
  font-size: 8px;
  line-height: 10px;
  text-align: right;
  margin-left: 5px;
}
```
FILE: script.js
```js
const names = ["Abaco", "Abbondio", "Abelardo", "Abenzio", "Abramio", "Acacio", "Accursio", "Acilio",
  "Acrisio", "Adalberto", "Adalgiso", "Adamo", "Adelardo", "Adelchi", "Adelgardo", "Adeodato",
  "Adone", "Adrione", "Agabio", "Agapito"];
const weekdays = ["lun", "mar", "mer", "gio", "ven", "sab", "dom"];
const months = ["GEN", "FEB", "MAR", "APR", "MAG", "GIU", "LUG", "AGO", "SET", "OTT", "NOV", "DIC"];
const rest = [1, 6, 7, 13, 14, 20, 21, 27, 28];
const festivo = 23;

// giorni segnati per riga
const marks = {
  5: [2, 3, 4, 5, 25, 26, 29, 30, 31],
  6: [2], 7: [2], 9: [2],
  10: [2, 3, 4, 5],
  12: [8, 17],
  14: [17, 18],
  16: [2, 3, 4, 5, 23, 24, 25, 26],
  17: [19],
  18: [24],
  21: [2, 3, 4, 5, 8, 9, 10, 11, 12, 15],
  24: [2]
};

function colName(i) {
  return i < 26 ? String.fromCharCode(65 + i) : "A" + String.fromCharCode(39 + i);
}

const days = Array.from({ length: 31 }, (_, i) => i + 1);
const tail = "<td></td>".repeat(4);

let html = '<colgroup><col class="w-head"><col class="w-a"><col class="w-a"><col class="w-c">';
html += '<col class="w-day">'.repeat(32) + '<col class="w-aj"><col class="w-ak"><col></colgroup>';

html += '<thead><tr class="top"><th class="corner"></th>';
for (let i = 0; i < 37; i++) {
  html += `<th class="${i === 21 ? "sel" : ""}">${colName(i)}</th>`;
}
html += "<th></th></tr></thead><tbody>";

// riga 1: pulsanti dei mesi
html += '<tr class="top"><th>1</th><td class="green">GEN</td><td></td><td></td>';
days.forEach(d => {
  const m = (d - 5) / 2;
  if (months[m]) {
    html += `<td class="under month ${m === 0 ? "on" : ""}"><button>${months[m]}</button></td>`;
  } else {
    html += `<td class="${d > 2 && d < 30 ? "under" : ""}"></td>`;
  }
});
html += '<td></td><td colspan="2" class="graph"><button>GRAFICO</button></td><td></td></tr>';

html += `<tr class="top"><th>2</th><td></td><td></td><td class="edge"></td><td colspan="31" class="title">GENNAIO</td>${tail}</tr>`;

html += '<tr class="r-days"><th>3</th><td></td><td></td><td class="edge"></td>';
days.forEach(d => html += `<td class="day"><span>${weekdays[(d - 1) % 7]}</span></td>`);
html += tail + "</tr>";

html += '<tr class="top"><th>4</th><td></td><td></td><td class="green edge under">COLLABORATORI</td>';
days.forEach(d => html += `<td class="num">${String(d).padStart(2, "0")}</td>`);
html += tail + "</tr>";

names.forEach((name, i) => {
  const row = i + 5;
  html += `<tr><th class="${row === 18 ? "sel" : ""}">${row}</th><td></td><td class="edge"></td><td class="person">${name}</td>`;
  days.forEach(d => {
    const on = (marks[row] || []).includes(d);
    let cls = "cell";
    if (rest.includes(d)) cls += " rest";
    else if (d === festivo) cls += " fest";
    else if (on) cls += " one";
    if (row === 18 && d === 19) cls += " active";
    let extra = "";
    if (row === 14 && d === 17) {
      cls += " hover";
      extra = '<svg class="cursor" width="11" height="11"><path d="M3.500.500h4v3h3v4h-3v3h-4v-3h-3v-4h3z" fill="#fff" stroke="#111"/></svg>';
    }
    html += `<td class="${cls}">${on ? "1" : ""}${extra}</td>`;
  });
  html += tail + "</tr>";
});

html += `<tr class="r-end"><th>25</th><td></td><td></td><td colspan="32" class="base"></td>${tail}</tr></tbody>`;

document.getElementById("grid").innerHTML = html;
```
